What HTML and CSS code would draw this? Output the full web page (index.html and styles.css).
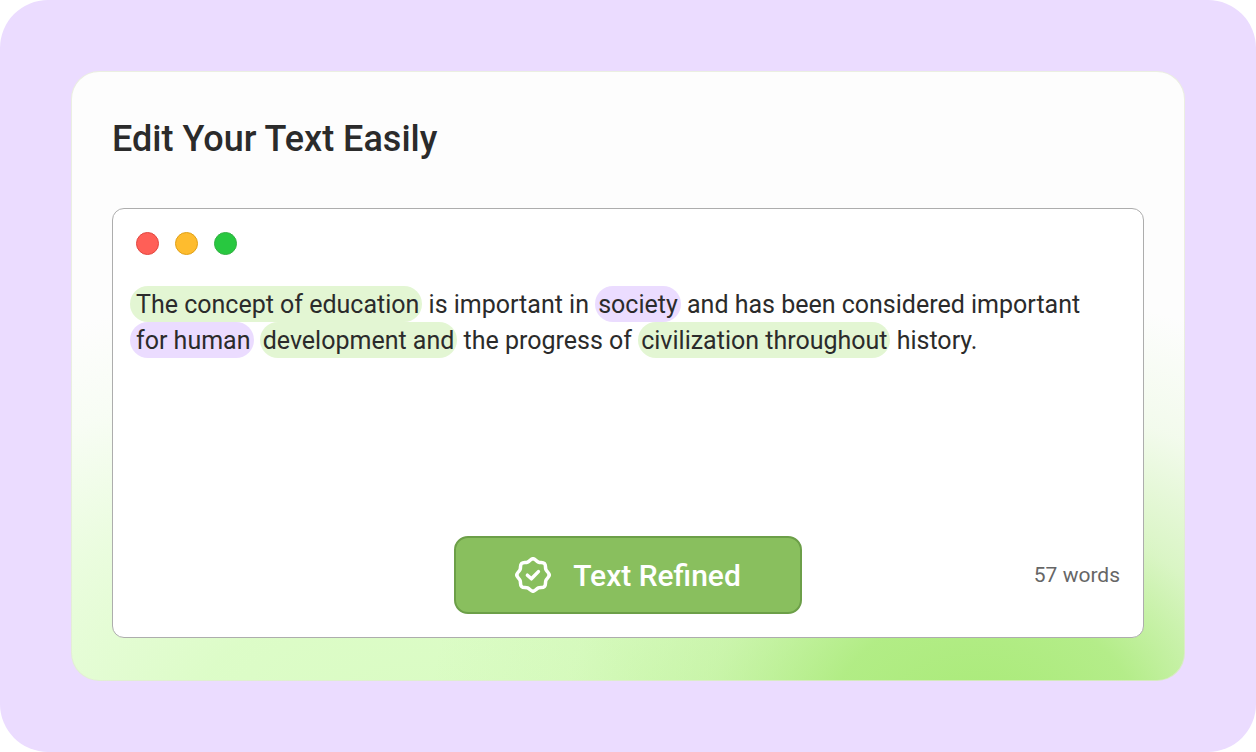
FILE: index.html
```html
<!DOCTYPE html>
<html lang="en">
    <head>
        <meta charset="utf-8">
        <title>Edit Your Text Easily</title>
        <meta name="viewport" content="width=device-width, initial-scale=1">
        <link rel="stylesheet" href="styles.css">
    </head>
    <body>
        <div class="stage">
            <main class="card">
                <h1 class="title">Edit Your Text Easily</h1>
                <section class="editor">
                    <div class="dots">
                        <span class="dot red"></span>
                        <span class="dot yellow"></span>
                        <span class="dot green"></span>
                    </div>
                    <p class="text">
                        <mark class="hl-green line-start">The concept of education</mark> is important in <mark class="hl-purple">society</mark> and has been considered important<br>
                        <mark class="hl-purple line-start">for human</mark> <mark class="hl-green">development and</mark> the progress of <mark class="hl-green">civilization throughout</mark> history.
                    </p>
                    <div class="footer">
                        <button class="refine" type="button">
                            <svg class="badge" viewBox="0 0 36 36" aria-hidden="true">
                                <path id="wave" d="M18 1.8C20.4 1.8 21.16 4.15 23.36 5.07C25.56 5.99 27.76 4.84 29.46 6.54C31.16 8.24 30.01 10.44 30.93 12.64C31.85 14.84 34.2 15.6 34.2 18"/>
                                <use href="#wave" transform="rotate(90 18 18)"/>
                                <use href="#wave" transform="rotate(180 18 18)"/>
                                <use href="#wave" transform="rotate(270 18 18)"/>
                                <path d="M12.4 18.2L16.4 21.8L23.4 14.6"/>
                            </svg>
                            Text Refined
                        </button>
                        <span class="count">57 words</span>
                    </div>
                </section>
            </main>
        </div>
    </body>
</html>
```
FILE: styles.css
```css
* {
    box-sizing: border-box;
}

body {
    margin: 0;
    background: #fff;
    color: #2b2b2b;
    font-family: Roboto, "Liberation Sans", sans-serif;
}

.stage {
    display: flex;
    min-height: 100vh;
    padding: 71px;
    border-radius: 48px;
    background: #ebdcff;
}

.card {
    flex: 1;
    display: flex;
    flex-direction: column;
    padding: 44px 40px 42px;
    border: 1px solid rgba(226, 232, 214, 0.7);
    border-radius: 28px;
    background:
        radial-gradient(ellipse 50% 72% at 82% 108%, #a8ea76 0%, rgba(168, 234, 118, 0.85) 28%, rgba(168, 234, 118, 0.42) 50%, rgba(168, 234, 118, 0.12) 75%, rgba(168, 234, 118, 0) 100%),
        radial-gradient(ellipse 72% 74% at 32% 108%, #d9fcc2 0%, rgba(217, 252, 194, 0.9) 30%, rgba(217, 252, 194, 0.5) 58%, rgba(217, 252, 194, 0.15) 80%, rgba(217, 252, 194, 0) 100%),
        #fdfdfd;
    background-origin: border-box;
}

.title {
    margin: 0 0 46px;
    font-size: 36px;
    line-height: 46px;
    font-weight: 500;
}

.editor {
    flex: 1;
    display: flex;
    flex-direction: column;
    padding: 23px;
    border: 1px solid #adadad;
    border-radius: 12px;
    background: #fff;
}

.dots {
    display: flex;
    gap: 16px;
    margin-bottom: 32px;
}

.dot {
    width: 23px;
    height: 23px;
    border: 1px solid;
    border-radius: 50%;
}

.red {
    background: #ff5f57;
    border-color: #e2463f;
}

.yellow {
    background: #febc2e;
    border-color: #e1a116;
}

.green {
    background: #28c840;
    border-color: #33b043;
}

.text {
    margin: 0 0 0 -6px;
    font-size: 25px;
    line-height: 36px;
}

mark {
    padding: 4px 3px 3px;
    border-radius: 18px;
    color: inherit;
}

.line-start {
    padding-left: 6px;
}

.hl-green {
    background: #e3f6d3;
}

.hl-purple {
    background: #ebdcff;
}

.footer {
    display: grid;
    grid-template-columns: 1fr auto 1fr;
    align-items: center;
    margin-top: auto;
}

.refine {
    grid-column: 2;
    display: flex;
    align-items: center;
    gap: 22px;
    height: 78px;
    padding: 0 59px;
    border: 2px solid #6c9f48;
    border-radius: 14px;
    background: #89bf5e;
    color: #fff;
    font-family: inherit;
    font-size: 30px;
    font-weight: 500;
    cursor: pointer;
}

.badge {
    width: 36px;
    height: 36px;
    fill: none;
    stroke: #fff;
    stroke-width: 3.5;
    stroke-linecap: round;
    stroke-linejoin: round;
}

.count {
    justify-self: end;
    color: #666;
    font-size: 21px;
}
```
